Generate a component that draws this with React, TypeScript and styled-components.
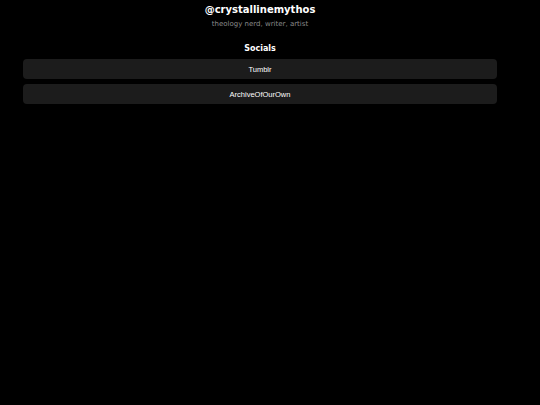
import styled, { createGlobalStyle } from "styled-components";

const GlobalStyle = createGlobalStyle`
  html, body {
    margin: 0;
    padding: 0;
    background: #000000;
  }
  body {
    font-family: "DejaVu Sans", sans-serif;
    color: #ffffff;
    min-height: 405px;
  }
`;

const links = [
  { label: "Tumblr", href: "#" },
  { label: "ArchiveOfOurOwn", href: "#" },
];

const App = () => {
  return (
    <>
      <GlobalStyle />
      <Page>
        <Header>
          <Handle>@crystallinemythos</Handle>
          <Bio>theology nerd, writer, artist</Bio>
        </Header>
        <Section>
          <SectionTitle>Socials</SectionTitle>
          <LinkList>
            {links.map((link) => (
              <LinkButton key={link.label} href={link.href}>
                {link.label}
              </LinkButton>
            ))}
          </LinkList>
        </Section>
      </Page>
    </>
  );
};

export default App;

const Page = styled.div`
  width: 474px;
  margin-left: 23px;
  display: flex;
  flex-direction: column;
  align-items: stretch;
`;

const Header = styled.header`
  display: flex;
  flex-direction: column;
  align-items: center;
  padding-top: 3px;
`;

const Handle = styled.h1`
  margin: 0;
  font-size: 10px;
  font-weight: bold;
  line-height: 13px;
`;

const Bio = styled.p`
  margin: 4px 0 0;
  font-size: 7px;
  line-height: 9px;
  color: #8a8a8a;
`;

const Section = styled.section`
  display: flex;
  flex-direction: column;
  align-items: stretch;
  margin-top: 15px;
`;

const SectionTitle = styled.h2`
  margin: 0 0 5px;
  text-align: center;
  font-size: 8px;
  font-weight: bold;
  line-height: 10px;
`;

const LinkList = styled.div`
  display: flex;
  flex-direction: column;
  gap: 5px;
`;

const LinkButton = styled.a`
  height: 20px;
  display: flex;
  align-items: center;
  justify-content: center;
  background: #1c1c1c;
  border-radius: 4px;
  color: #ffffff;
  text-decoration: none;
  font-family: "Liberation Sans", Arial, sans-serif;
  font-size: 7.5px;
`;
